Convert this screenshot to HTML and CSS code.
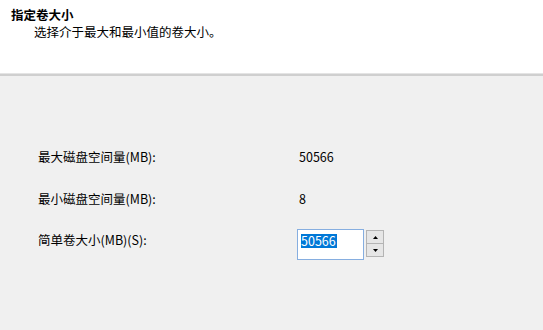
FILE: index.html
```html
<!DOCTYPE html>
<html lang="zh-CN">
<head>
<meta charset="utf-8">
<link rel="stylesheet" href="styles.css">
</head>
<body>
<div class="header">
  <div class="title">指定卷大小</div>
  <div class="subtitle">选择介于最大和最小值的卷大小。</div>
</div>
<div class="sep"></div>
<div class="content">
  <div class="row r1">
    <div class="label">最大磁盘空间量(MB):</div>
    <div class="value">50566</div>
  </div>
  <div class="row r2">
    <div class="label">最小磁盘空间量(MB):</div>
    <div class="value">8</div>
  </div>
  <div class="row r3">
    <div class="label top">简单卷大小(MB)(S):</div>
    <div class="spin-wrap">
      <div class="input"><span class="sel">50566</span></div>
      <div class="spinner">
        <div class="btn"><svg width="5" height="3" viewBox="0 0 5 3"><path d="M2.5 0 L5 3 L0 3 Z" fill="#000"/></svg></div>
        <div class="btn"><svg width="5" height="3" viewBox="0 0 5 3"><path d="M0 0 L5 0 L2.5 3 Z" fill="#000"/></svg></div>
      </div>
    </div>
  </div>
</div>
</body>
</html>
```
FILE: styles.css
```css
html, body {
  margin: 0;
  padding: 0;
  width: 543px;
  height: 330px;
  overflow: hidden;
  font-family: "Noto Sans CJK SC", "Noto Sans", sans-serif;
  font-size: 12.5px;
  color: #000;
  background: #f0f0f0;
}
.header {
  background: #fff;
  height: 73px;
  box-sizing: border-box;
  padding-top: 7px;
}
.title {
  font-weight: bold;
  line-height: 16px;
  padding-left: 11px;
}
.subtitle {
  line-height: 16px;
  padding-left: 34px;
  margin-top: 1px;
}
.sep {
  height: 1px;
  background: #e4e4e4;
  border-bottom: 2px solid #cfcfcf;
}
.content {
  display: flex;
  flex-direction: column;
  padding-left: 38px;
}
.row {
  display: flex;
  align-items: flex-start;
  line-height: 16px;
}
.r1 { margin-top: 73px; }
.r2 { margin-top: 26px; }
.r3 { margin-top: 22px; }
.label {
  width: 259px;
  flex: none;
}
.label.top { padding-top: 3px; }
.value { padding-left: 2px; }
.spin-wrap {
  display: flex;
  align-items: flex-start;
  gap: 2px;
}
.input {
  width: 67px;
  height: 31px;
  box-sizing: border-box;
  border: 1px solid #86aee0;
  background: #fff;
  padding: 3px 0 0 3px;
}
.sel {
  display: inline-block;
  background: #0078d7;
  color: #fff;
  line-height: 14px;
  padding: 0 1px 0 0;
}
.spinner {
  display: flex;
  flex-direction: column;
  margin-top: 1px;
  gap: 0;
}
.btn {
  width: 18px;
  height: 14px;
  box-sizing: border-box;
  border: 1px solid #b4b4b4;
  background: #e6e6e6;
  display: flex;
  align-items: center;
  justify-content: center;
}
.btn + .btn { margin-top: -1px; }
```
